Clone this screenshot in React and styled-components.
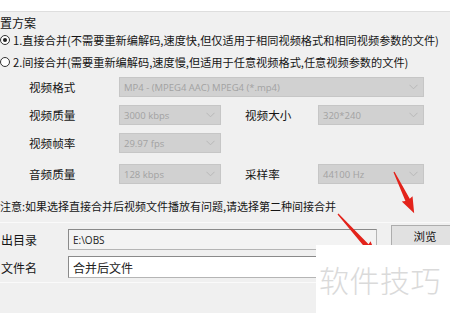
import React from "react";
import styled, { createGlobalStyle } from "styled-components";

const Global = createGlobalStyle`
  html, body { margin: 0; padding: 0; background: #f0f0f0; }
  * { box-sizing: border-box; }
`;

const Page = styled.div`
  position: relative;
  width: 450px;
  height: 313px;
  overflow: hidden;
  background: #f0f0f0;
  font-family: "Noto Sans CJK SC", "Noto Sans", sans-serif;
  color: #151515;
  display: flex;
  flex-direction: column;
`;

const TopStrip = styled.div`
  height: 12px;
  background: #fff;
  border-bottom: 1px solid #dedede;
  flex: none;
`;

const Title = styled.div`
  margin-top: 4px;
  height: 14px;
  line-height: 14px;
  font-size: 12px;
`;

const RadioRow = styled.div`
  display: flex;
  align-items: center;
  height: 20px;
  margin-top: ${p => p.$mt || 0}px;
  gap: 3px;
  font-size: 11.2px;
  white-space: nowrap;
`;

const Radio = styled.span`
  position: relative;
  width: 10px;
  height: 10px;
  flex: none;
  border-radius: 50%;
  border: 1px solid #333;
  background: #fff;
  &::after {
    content: "";
    display: ${p => (p.$checked ? "block" : "none")};
    position: absolute;
    left: 2px;
    top: 2px;
    width: 4px;
    height: 4px;
    border-radius: 50%;
    background: #222;
  }
`;

const SettingRow = styled.div`
  display: grid;
  grid-template-columns: 90px 102px 24px 73px 106px;
  align-items: center;
  height: 20px;
  padding-left: 29px;
  margin-top: ${p => p.$mt || 0}px;
`;

const FieldLabel = styled.span`
  font-size: 11.6px;
  white-space: nowrap;
  grid-column: ${p => p.$col || "auto"};
`;

const Select = styled.div`
  grid-column: ${p => p.$span || "auto"};
  height: 20px;
  display: flex;
  align-items: center;
  justify-content: space-between;
  background: #d1d1d1;
  border: 1px solid #c6c6c6;
  padding: 0 5px 0 4px;
  font-family: "Open Sans", "Liberation Sans", sans-serif;
  font-size: 9.5px;
  color: #a2a2a2;
  white-space: nowrap;
  overflow: hidden;
`;

const Chevron = () => (
  <svg width="9" height="6" viewBox="0 0 9 6">
    <polyline points="0.5,0.8 4.5,4.8 8.5,0.8" fill="none" stroke="#b8b8b8" strokeWidth="1" />
  </svg>
);

const Note = styled.div`
  margin-top: 15px;
  height: 14px;
  line-height: 14px;
  font-size: 11px;
  white-space: nowrap;
`;

const Divider = styled.div`
  margin-top: ${p => p.$mt || 0}px;
  height: 1px;
  background: #dadada;
  border-bottom: 1px solid #fafafa;
  flex: none;
`;

const PathRow = styled.div`
  display: flex;
  align-items: center;
  height: ${p => p.$h}px;
  margin-top: ${p => p.$mt || 0}px;
`;

const PathLabel = styled.span`
  width: 68px;
  flex: none;
  padding-left: 1px;
  font-size: 12px;
  white-space: nowrap;
`;

const TextBox = styled.div`
  width: 309px;
  height: 100%;
  flex: none;
  display: flex;
  align-items: center;
  padding-left: 4px;
  background: ${p => (p.$readonly ? "#f3f3f3" : "#fff")};
  border: 1px solid #8a8a8a;
  border-right-color: #b5b5b5;
  border-bottom-color: #b5b5b5;
  font-family: ${p => (p.$latin ? '"Open Sans", "Liberation Sans", sans-serif' : '"Noto Sans CJK SC", sans-serif')};
  font-size: ${p => (p.$latin ? 10 : 12)}px;
  color: #222;
`;

const Button = styled.div`
  margin-left: 14px;
  align-self: flex-start;
  margin-top: -4px;
  width: 68px;
  height: 22px;
  flex: none;
  display: flex;
  align-items: center;
  justify-content: center;
  background: #e1e1e1;
  border: 1px solid #adadad;
  font-size: 11.5px;
  color: #111;
`;

const Arrows = styled.svg`
  position: absolute;
  left: 0;
  top: 0;
  pointer-events: none;
`;

const Watermark = styled.div`
  position: absolute;
  left: 316px;
  top: 245px;
  width: 134px;
  height: 68px;
  background: #fff;
  display: flex;
  align-items: center;
  padding-left: 3px;
  font-family: "Noto Sans CJK SC", sans-serif;
  font-weight: 300;
  font-size: 30px;
  color: #dadada;
  letter-spacing: 0.5px;
  white-space: nowrap;
`;

const ArrowShape = ({ x, y, angle, len }) => (
  <g transform={`translate(${x} ${y}) rotate(${angle})`}>
    <path
      d={`M0,-0.6 L${len - 15},-2.4 L${len - 16},-6 L${len},0 L${len - 16},6 L${len - 15},2.4 L0,0.6 Z`}
      fill="#e3231b"
    />
  </g>
);

export default function App() {
  return (
    <>
      <Global />
      <Page>
        <TopStrip />
        <Title>置方案</Title>
        <RadioRow>
          <Radio $checked />
          <span>1.直接合并(不需要重新编解码,速度快,但仅适用于相同视频格式和相同视频参数的文件)</span>
        </RadioRow>
        <RadioRow $mt={2}>
          <Radio />
          <span>2.间接合并(需要重新编解码,速度慢,但适用于任意视频格式,任意视频参数的文件)</span>
        </RadioRow>

        <SettingRow $mt={5}>
          <FieldLabel>视频格式</FieldLabel>
          <Select $span="2 / 6">
            <span>MP4 - (MPEG4 AAC) MPEG4 (*.mp4)</span>
            <Chevron />
          </Select>
        </SettingRow>
        <SettingRow $mt={8}>
          <FieldLabel>视频质量</FieldLabel>
          <Select>
            <span>3000 kbps</span>
            <Chevron />
          </Select>
          <FieldLabel $col="4">视频大小</FieldLabel>
          <Select>
            <span>320*240</span>
            <Chevron />
          </Select>
        </SettingRow>
        <SettingRow $mt={8}>
          <FieldLabel>视频帧率</FieldLabel>
          <Select>
            <span>29.97 fps</span>
            <Chevron />
          </Select>
        </SettingRow>
        <SettingRow $mt={11}>
          <FieldLabel>音频质量</FieldLabel>
          <Select>
            <span>128 kbps</span>
            <Chevron />
          </Select>
          <FieldLabel $col="4">采样率</FieldLabel>
          <Select>
            <span>44100 Hz</span>
            <Chevron />
          </Select>
        </SettingRow>

        <Note>注意:如果选择直接合并后视频文件播放有问题,请选择第二种间接合并</Note>
        <Divider $mt={9} />

        <PathRow $h={21} $mt={6}>
          <PathLabel>出目录</PathLabel>
          <TextBox $readonly $latin>E:\OBS</TextBox>
          <Button>浏览</Button>
        </PathRow>
        <PathRow $h={22} $mt={6}>
          <PathLabel>文件名</PathLabel>
          <TextBox>合并后文件</TextBox>
        </PathRow>
        <Divider $mt={4} />

        <Arrows width="450" height="313" viewBox="0 0 450 313">
          <ArrowShape x={394} y={172} angle={64} len={46} />
          <ArrowShape x={338} y={214} angle={48} len={58} />
        </Arrows>
        <Watermark>软件技巧</Watermark>
      </Page>
    </>
  );
}
